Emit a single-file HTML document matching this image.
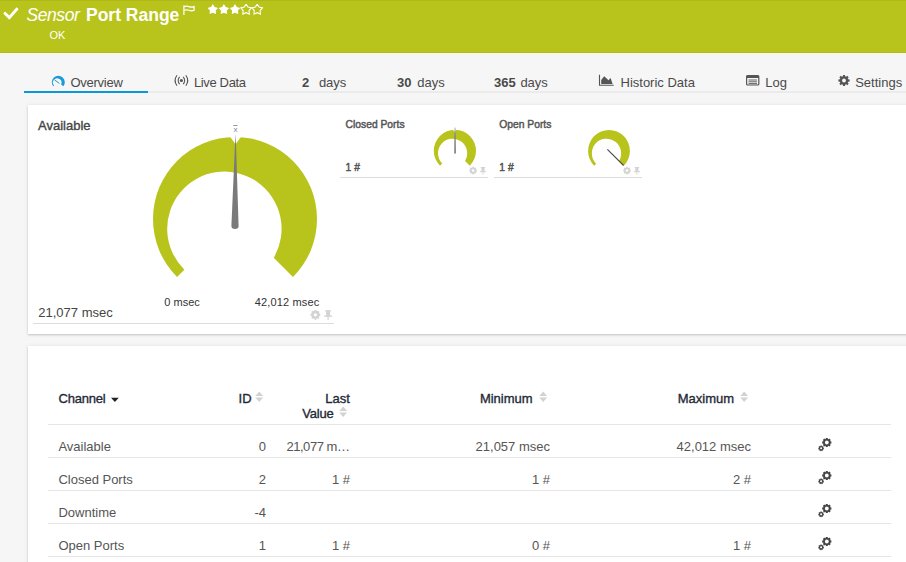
<!DOCTYPE html>
<html><head><meta charset="utf-8">
<style>
html,body{margin:0;padding:0;}
body{width:906px;height:562px;overflow:hidden;position:relative;background:#f6f6f6;font-family:"Liberation Sans",sans-serif;}
.t{position:absolute;white-space:nowrap;}
.abs{position:absolute;}
</style></head><body>
<div class="abs" style="left:0;top:0;width:906px;height:53px;background:#b8c41c;"></div>
<div class="abs" style="left:0;top:52px;width:906px;height:1px;background:#b0bc10;"></div>
<div class="abs" style="left:0;top:0;width:906px;height:1px;background:#aeb817;"></div>
<svg class="abs" style="left:0;top:0" width="30" height="30"><path d="M4.2 12.6 L9.3 17.6 L17.6 8.2" fill="none" stroke="#fff" stroke-width="2.8"/></svg>
<div class="t" style="left:26.40px;top:6.99px;font-size:17.5px;line-height:17.5px;font-weight:normal;font-style:italic;color:#fff;letter-spacing:-0.4px;">Sensor</div>
<div class="t" style="left:86.00px;top:6.99px;font-size:17.5px;line-height:17.5px;font-weight:bold;font-style:normal;color:#fff;">Port Range</div>
<svg class="abs" style="left:0;top:0" width="200" height="20"><path d="M183.9 15 V5.6 M183.9 6.6 Q186.4 5.6 189 6.6 Q191.6 7.6 194.1 6.6 V10.3 Q191.6 11.3 189 10.3 Q186.4 9.3 183.9 10.3" fill="none" stroke="#fff" stroke-width="1.2"/></svg><svg class="abs" style="left:208px;top:4px" width="60" height="12"><polygon points="4.80,0.10 6.61,3.11 10.03,3.90 7.73,6.55 8.03,10.05 4.80,8.68 1.57,10.05 1.87,6.55 -0.43,3.90 2.99,3.11" fill="#fff"/><polygon points="15.90,0.10 17.71,3.11 21.13,3.90 18.83,6.55 19.13,10.05 15.90,8.68 12.67,10.05 12.97,6.55 10.67,3.90 14.09,3.11" fill="#fff"/><polygon points="27.00,0.10 28.81,3.11 32.23,3.90 29.93,6.55 30.23,10.05 27.00,8.68 23.77,10.05 24.07,6.55 21.77,3.90 25.19,3.11" fill="#fff"/><polygon points="38.10,0.10 39.91,3.11 43.33,3.90 41.03,6.55 41.33,10.05 38.10,8.68 34.87,10.05 35.17,6.55 32.87,3.90 36.29,3.11" fill="none" stroke="#fff" stroke-width="1.1"/><polygon points="49.20,0.10 51.01,3.11 54.43,3.90 52.13,6.55 52.43,10.05 49.20,8.68 45.97,10.05 46.27,6.55 43.97,3.90 47.39,3.11" fill="none" stroke="#fff" stroke-width="1.1"/></svg>
<div class="t" style="left:49.40px;top:30.29px;font-size:11px;line-height:11px;font-weight:normal;font-style:normal;color:#fff;">OK</div>
<div class="abs" style="left:24px;top:91px;width:882px;height:2px;background:#ebebeb;"></div>
<div class="abs" style="left:24px;top:91px;width:124px;height:2px;background:#0a98d6;"></div>
<svg class="abs" style="left:0;top:0" width="906" height="100"><path d="M53.18 86.20 A6.5 6.5 0 1 1 63.42 86.20 L61.11 84.39 A4.3 4.3 0 1 0 54.05 85.52 Z" fill="#1a9ad6"/><path d="M54.6 79.9 L59.3 83.4" stroke="#1a9ad6" stroke-width="1"/><circle cx="181.4" cy="80.5" r="1.6" fill="#555"/><path d="M179.7 76.9 A5 5 0 0 0 179.7 84.1 M183.1 76.9 A5 5 0 0 1 183.1 84.1 M177 75.2 A9 9 0 0 0 177 85.8 M185.8 75.2 A9 9 0 0 1 185.8 85.8" fill="none" stroke="#555" stroke-width="1.1"/><path d="M599.5 74.8 V85.2 H613.7" fill="none" stroke="#555" stroke-width="1.1"/><path d="M601.2 83.9 V80 L604.2 76.2 L608.5 80.2 L610.6 78 L612.6 83.9 Z" fill="#555"/></svg>
<div class="t" style="left:70.40px;top:75.80px;font-size:13px;line-height:13px;font-weight:normal;font-style:normal;color:#4a4a4a;letter-spacing:-0.25px;">Overview</div>
<div class="t" style="left:193.90px;top:75.80px;font-size:13px;line-height:13px;font-weight:normal;font-style:normal;color:#4a4a4a;letter-spacing:-0.35px;">Live Data</div>
<div class="t" style="left:301.90px;top:75.80px;font-size:13px;line-height:13px;font-weight:bold;font-style:normal;color:#4a4a4a;">2</div>
<div class="t" style="left:318.90px;top:75.80px;font-size:13px;line-height:13px;font-weight:normal;font-style:normal;color:#4a4a4a;">days</div>
<div class="t" style="left:397.10px;top:75.80px;font-size:13px;line-height:13px;font-weight:bold;font-style:normal;color:#4a4a4a;">30</div>
<div class="t" style="left:417.20px;top:75.80px;font-size:13px;line-height:13px;font-weight:normal;font-style:normal;color:#4a4a4a;">days</div>
<div class="t" style="left:494.10px;top:75.80px;font-size:13px;line-height:13px;font-weight:bold;font-style:normal;color:#4a4a4a;">365</div>
<div class="t" style="left:520.40px;top:75.80px;font-size:13px;line-height:13px;font-weight:normal;font-style:normal;color:#4a4a4a;">days</div>
<div class="t" style="left:620.50px;top:75.80px;font-size:13px;line-height:13px;font-weight:normal;font-style:normal;color:#4a4a4a;">Historic Data</div>
<svg class="abs" style="left:746px;top:75px" width="14" height="11"><rect x="0.6" y="0.6" width="12.2" height="9.4" rx="1" fill="none" stroke="#555" stroke-width="1.2"/><rect x="0.6" y="0.6" width="12.2" height="2.4" fill="#555"/><path d="M2.5 5 H11 M2.5 6.8 H11 M2.5 8.6 H11" stroke="#555" stroke-width="0.9"/></svg>
<div class="t" style="left:765.20px;top:75.80px;font-size:13px;line-height:13px;font-weight:normal;font-style:normal;color:#4a4a4a;">Log</div>
<svg class="abs" style="left:837px;top:74px" width="14" height="14"><polygon points="5.85,2.36 6.06,0.88 7.94,0.88 8.15,2.36 9.12,2.76 10.31,1.86 11.64,3.19 10.74,4.38 11.14,5.35 12.62,5.56 12.62,7.44 11.14,7.65 10.74,8.62 11.64,9.81 10.31,11.14 9.12,10.24 8.15,10.64 7.94,12.12 6.06,12.12 5.85,10.64 4.88,10.24 3.69,11.14 2.36,9.81 3.26,8.62 2.86,7.65 1.38,7.44 1.38,5.56 2.86,5.35 3.26,4.38 2.36,3.19 3.69,1.86 4.88,2.76" fill="#555"/><circle cx="7" cy="6.5" r="1.9" fill="#f6f6f6"/></svg>
<div class="t" style="left:855.20px;top:75.80px;font-size:13px;line-height:13px;font-weight:normal;font-style:normal;color:#4a4a4a;">Settings</div>
<div class="abs" style="left:28px;top:105px;width:900px;height:229px;background:#fff;box-shadow:0 1px 2px rgba(0,0,0,0.18),0 0 5px rgba(0,0,0,0.06);"></div>
<div class="t" style="left:38.00px;top:118.90px;font-size:13px;line-height:13px;font-weight:normal;font-style:normal;color:#444;-webkit-text-stroke:0.35px #444;">Available</div>
<div class="abs" style="left:33px;top:323px;width:301px;height:1px;background:#ddd;"></div>
<div class="t" style="left:38.30px;top:305.80px;font-size:13px;line-height:13px;font-weight:normal;font-style:normal;color:#444;">21,077 msec</div>
<div class="t" style="left:164.30px;top:297.49px;font-size:11px;line-height:11px;font-weight:normal;font-style:normal;color:#333;">0 msec</div>
<div class="t" style="left:254.80px;top:297.49px;font-size:11px;line-height:11px;font-weight:normal;font-style:normal;color:#333;letter-spacing:0.15px;">42,012 msec</div>
<svg class="abs" style="left:0;top:0" width="906" height="562"><path d="M177.02 276.98 A82 82 0 1 1 292.98 276.98 L273.74 257.74 A57.2 57.2 0 1 0 184.36 269.64 Z" fill="#b8c41c"/><path d="M229.6 136 L235.5 144.2 L241.7 136 Z" fill="#fff"/><path d="M235.5 134 L236 144 L238.6 226 Q238.6 229 235 229 Q231.4 229 231.4 226 L235 144 Z" fill="#7a7a7a"/><path d="M233.2 125.5 H237.6" stroke="#8a8f99" stroke-width="0.9"/><text x="235.4" y="131.8" font-size="8" text-anchor="middle" fill="#7d8594" font-family="Liberation Sans">x</text><path d="M439.98 165.72 A21.1 21.1 0 1 1 469.82 165.72 L465.04 160.94 A14.6 14.6 0 1 0 442.18 163.52 Z" fill="#b8c41c"/><path d="M452.3 129 L454.6 132 L457 129 Z" fill="#fff"/><defs><linearGradient id="ng" x1="0" y1="0" x2="0" y2="1"><stop offset="0" stop-color="#ccc"/><stop offset="0.25" stop-color="#888"/><stop offset="1" stop-color="#555"/></linearGradient></defs><rect x="454.4" y="127.5" width="1.3" height="26" fill="url(#ng)"/><path d="M594.22 165.68 A20.9 20.9 0 1 1 623.78 165.68 L619.02 160.92 A14.65 14.65 0 1 0 596.19 163.71 Z" fill="#b8c41c"/><path d="M607.4 149.3 L623.6 165.5" stroke="#4a4a4a" stroke-width="1.1"/><polygon points="314.20,311.09 314.42,309.90 316.38,309.90 316.60,311.09 317.18,311.33 318.18,310.64 319.56,312.02 318.87,313.02 319.11,313.60 320.30,313.82 320.30,315.78 319.11,316.00 318.87,316.58 319.56,317.58 318.18,318.96 317.18,318.27 316.60,318.51 316.38,319.70 314.42,319.70 314.20,318.51 313.62,318.27 312.62,318.96 311.24,317.58 311.93,316.58 311.69,316.00 310.50,315.78 310.50,313.82 311.69,313.60 311.93,313.02 311.24,312.02 312.62,310.64 313.62,311.33" fill="#d3d3d3"/><circle cx="315.4" cy="314.8" r="1.6" fill="#fff"/><rect x="325.30" y="310.20" width="5.60" height="1.30" fill="#d3d3d3"/><rect x="326.10" y="310.80" width="4.00" height="5.00" fill="#d3d3d3"/><rect x="324.30" y="315.40" width="7.60" height="1.50" fill="#d3d3d3"/><rect x="327.50" y="316.80" width="1.20" height="3.20" fill="#d3d3d3"/><polygon points="472.17,167.70 472.34,166.77 473.86,166.77 474.03,167.70 474.49,167.89 475.27,167.36 476.34,168.43 475.81,169.21 476.00,169.67 476.93,169.84 476.93,171.36 476.00,171.53 475.81,171.99 476.34,172.77 475.27,173.84 474.49,173.31 474.03,173.50 473.86,174.43 472.34,174.43 472.17,173.50 471.71,173.31 470.93,173.84 469.86,172.77 470.39,171.99 470.20,171.53 469.27,171.36 469.27,169.84 470.20,169.67 470.39,169.21 469.86,168.43 470.93,167.36 471.71,167.89" fill="#d3d3d3"/><circle cx="473.1" cy="170.6" r="1.2480000000000002" fill="#fff"/><rect x="480.82" y="167.01" width="4.37" height="1.01" fill="#d3d3d3"/><rect x="481.45" y="167.48" width="3.12" height="3.90" fill="#d3d3d3"/><rect x="480.04" y="171.07" width="5.93" height="1.17" fill="#d3d3d3"/><rect x="482.54" y="172.16" width="0.94" height="2.50" fill="#d3d3d3"/><polygon points="626.07,167.70 626.24,166.77 627.76,166.77 627.93,167.70 628.39,167.89 629.17,167.36 630.24,168.43 629.71,169.21 629.90,169.67 630.83,169.84 630.83,171.36 629.90,171.53 629.71,171.99 630.24,172.77 629.17,173.84 628.39,173.31 627.93,173.50 627.76,174.43 626.24,174.43 626.07,173.50 625.61,173.31 624.83,173.84 623.76,172.77 624.29,171.99 624.10,171.53 623.17,171.36 623.17,169.84 624.10,169.67 624.29,169.21 623.76,168.43 624.83,167.36 625.61,167.89" fill="#d3d3d3"/><circle cx="627.0" cy="170.6" r="1.2480000000000002" fill="#fff"/><rect x="634.72" y="167.01" width="4.37" height="1.01" fill="#d3d3d3"/><rect x="635.35" y="167.48" width="3.12" height="3.90" fill="#d3d3d3"/><rect x="633.94" y="171.07" width="5.93" height="1.17" fill="#d3d3d3"/><rect x="636.44" y="172.16" width="0.94" height="2.50" fill="#d3d3d3"/></svg>
<div class="t" style="left:345.60px;top:119.88px;font-size:10.3px;line-height:10.3px;font-weight:normal;font-style:normal;color:#555;-webkit-text-stroke:0.45px #555;">Closed Ports</div>
<div class="t" style="left:345.60px;top:162.88px;font-size:10.3px;line-height:10.3px;font-weight:normal;font-style:normal;color:#555;-webkit-text-stroke:0.45px #555;">1 #</div>
<div class="abs" style="left:340px;top:177px;width:148px;height:1px;background:#ddd;"></div>
<div class="t" style="left:499.30px;top:119.88px;font-size:10.3px;line-height:10.3px;font-weight:normal;font-style:normal;color:#555;-webkit-text-stroke:0.45px #555;">Open Ports</div>
<div class="t" style="left:499.30px;top:162.88px;font-size:10.3px;line-height:10.3px;font-weight:normal;font-style:normal;color:#555;-webkit-text-stroke:0.45px #555;">1 #</div>
<div class="abs" style="left:494px;top:177px;width:148px;height:1px;background:#ddd;"></div>
<div class="abs" style="left:28px;top:346px;width:900px;height:260px;background:#fff;box-shadow:0 1px 2px rgba(0,0,0,0.18),0 0 5px rgba(0,0,0,0.06);"></div>
<div class="t" style="left:58.50px;top:392.00px;font-size:13px;line-height:13px;font-weight:normal;font-style:normal;color:#1f2a36;-webkit-text-stroke:0.35px #1f2a36;letter-spacing:-0.2px;">Channel</div>
<svg class="abs" style="left:110px;top:397px" width="10" height="6"><path d="M1 0.8 H8.8 L4.9 5 Z" fill="#222"/></svg>
<div class="t" style="left:238.60px;top:392.00px;font-size:13px;line-height:13px;font-weight:normal;font-style:normal;color:#1f2a36;-webkit-text-stroke:0.35px #1f2a36;">ID</div>
<svg class="abs" style="left:255.2px;top:390.6px" width="9" height="12"><path d="M0.3 5 L4.2 0.4 L8.1 5 Z M0.3 6.4 L4.2 11 L8.1 6.4 Z" fill="#d2d2d2"/></svg>
<div class="t" style="right:556.10px;top:392.00px;font-size:13px;line-height:13px;font-weight:normal;font-style:normal;color:#1f2a36;-webkit-text-stroke:0.35px #1f2a36;">Last</div>
<div class="t" style="left:302.30px;top:406.90px;font-size:13px;line-height:13px;font-weight:normal;font-style:normal;color:#1f2a36;-webkit-text-stroke:0.35px #1f2a36;letter-spacing:-0.2px;">Value</div>
<svg class="abs" style="left:339.3px;top:405.9px" width="9" height="12"><path d="M0.3 5 L4.2 0.4 L8.1 5 Z M0.3 6.4 L4.2 11 L8.1 6.4 Z" fill="#d2d2d2"/></svg>
<div class="t" style="left:479.90px;top:392.00px;font-size:13px;line-height:13px;font-weight:normal;font-style:normal;color:#1f2a36;-webkit-text-stroke:0.35px #1f2a36;">Minimum</div>
<svg class="abs" style="left:539.2px;top:390.6px" width="9" height="12"><path d="M0.3 5 L4.2 0.4 L8.1 5 Z M0.3 6.4 L4.2 11 L8.1 6.4 Z" fill="#d2d2d2"/></svg>
<div class="t" style="left:677.70px;top:392.00px;font-size:13px;line-height:13px;font-weight:normal;font-style:normal;color:#1f2a36;-webkit-text-stroke:0.35px #1f2a36;">Maximum</div>
<svg class="abs" style="left:740.2px;top:390.6px" width="9" height="12"><path d="M0.3 5 L4.2 0.4 L8.1 5 Z M0.3 6.4 L4.2 11 L8.1 6.4 Z" fill="#d2d2d2"/></svg>
<div class="abs" style="left:48px;top:424px;width:843px;height:1px;background:#e6e6e6;"></div>
<div class="t" style="left:58.40px;top:440.10px;font-size:13px;line-height:13px;font-weight:normal;font-style:normal;color:#555;">Available</div>
<div class="t" style="right:640.00px;top:440.10px;font-size:13px;line-height:13px;font-weight:normal;font-style:normal;color:#555;">0</div>
<div class="t" style="left:286.40px;top:440.10px;font-size:13px;line-height:13px;font-weight:normal;font-style:normal;color:#555;letter-spacing:-0.45px;">21,077 m…</div>
<div class="t" style="right:356.00px;top:440.10px;font-size:13px;line-height:13px;font-weight:normal;font-style:normal;color:#555;">21,057 msec</div>
<div class="t" style="right:155.00px;top:440.10px;font-size:13px;line-height:13px;font-weight:normal;font-style:normal;color:#555;">42,012 msec</div>
<div class="abs" style="left:48px;top:457px;width:843px;height:1px;background:#e6e6e6;"></div>
<svg class="abs" style="left:818px;top:437.9px" width="15" height="14"><polygon points="7.67,1.08 7.88,-0.11 9.72,-0.11 9.93,1.08 10.42,1.29 11.41,0.59 12.71,1.89 12.01,2.88 12.22,3.37 13.41,3.58 13.41,5.42 12.22,5.63 12.01,6.12 12.71,7.11 11.41,8.41 10.42,7.71 9.93,7.92 9.72,9.11 7.88,9.11 7.67,7.92 7.18,7.71 6.19,8.41 4.89,7.11 5.59,6.12 5.38,5.63 4.19,5.42 4.19,3.58 5.38,3.37 5.59,2.88 4.89,1.89 6.19,0.59 7.18,1.29" fill="#444"/><circle cx="8.8" cy="4.5" r="1.9" fill="#fff"/><polygon points="2.31,8.25 2.45,7.47 3.75,7.47 3.89,8.25 4.21,8.40 4.91,8.03 5.71,9.04 5.20,9.64 5.28,9.99 6.00,10.30 5.71,11.56 4.93,11.53 4.70,11.81 4.91,12.57 3.75,13.13 3.28,12.49 2.92,12.49 2.45,13.13 1.29,12.57 1.50,11.81 1.27,11.53 0.49,11.56 0.20,10.30 0.92,9.99 1.00,9.64 0.49,9.04 1.29,8.03 1.99,8.40" fill="#444"/><circle cx="3.1" cy="10.3" r="1.0" fill="#fff"/></svg>
<div class="t" style="left:58.40px;top:473.00px;font-size:13px;line-height:13px;font-weight:normal;font-style:normal;color:#555;">Closed Ports</div>
<div class="t" style="right:640.00px;top:473.00px;font-size:13px;line-height:13px;font-weight:normal;font-style:normal;color:#555;">2</div>
<div class="t" style="right:556.00px;top:473.00px;font-size:13px;line-height:13px;font-weight:normal;font-style:normal;color:#555;">1 #</div>
<div class="t" style="right:356.00px;top:473.00px;font-size:13px;line-height:13px;font-weight:normal;font-style:normal;color:#555;">1 #</div>
<div class="t" style="right:155.00px;top:473.00px;font-size:13px;line-height:13px;font-weight:normal;font-style:normal;color:#555;">2 #</div>
<div class="abs" style="left:48px;top:490px;width:843px;height:1px;background:#e6e6e6;"></div>
<svg class="abs" style="left:818px;top:470.9px" width="15" height="14"><polygon points="7.67,1.08 7.88,-0.11 9.72,-0.11 9.93,1.08 10.42,1.29 11.41,0.59 12.71,1.89 12.01,2.88 12.22,3.37 13.41,3.58 13.41,5.42 12.22,5.63 12.01,6.12 12.71,7.11 11.41,8.41 10.42,7.71 9.93,7.92 9.72,9.11 7.88,9.11 7.67,7.92 7.18,7.71 6.19,8.41 4.89,7.11 5.59,6.12 5.38,5.63 4.19,5.42 4.19,3.58 5.38,3.37 5.59,2.88 4.89,1.89 6.19,0.59 7.18,1.29" fill="#444"/><circle cx="8.8" cy="4.5" r="1.9" fill="#fff"/><polygon points="2.31,8.25 2.45,7.47 3.75,7.47 3.89,8.25 4.21,8.40 4.91,8.03 5.71,9.04 5.20,9.64 5.28,9.99 6.00,10.30 5.71,11.56 4.93,11.53 4.70,11.81 4.91,12.57 3.75,13.13 3.28,12.49 2.92,12.49 2.45,13.13 1.29,12.57 1.50,11.81 1.27,11.53 0.49,11.56 0.20,10.30 0.92,9.99 1.00,9.64 0.49,9.04 1.29,8.03 1.99,8.40" fill="#444"/><circle cx="3.1" cy="10.3" r="1.0" fill="#fff"/></svg>
<div class="t" style="left:58.40px;top:505.90px;font-size:13px;line-height:13px;font-weight:normal;font-style:normal;color:#555;">Downtime</div>
<div class="t" style="right:640.00px;top:505.90px;font-size:13px;line-height:13px;font-weight:normal;font-style:normal;color:#555;">-4</div>
<div class="abs" style="left:48px;top:523px;width:843px;height:1px;background:#e6e6e6;"></div>
<svg class="abs" style="left:818px;top:503.9px" width="15" height="14"><polygon points="7.67,1.08 7.88,-0.11 9.72,-0.11 9.93,1.08 10.42,1.29 11.41,0.59 12.71,1.89 12.01,2.88 12.22,3.37 13.41,3.58 13.41,5.42 12.22,5.63 12.01,6.12 12.71,7.11 11.41,8.41 10.42,7.71 9.93,7.92 9.72,9.11 7.88,9.11 7.67,7.92 7.18,7.71 6.19,8.41 4.89,7.11 5.59,6.12 5.38,5.63 4.19,5.42 4.19,3.58 5.38,3.37 5.59,2.88 4.89,1.89 6.19,0.59 7.18,1.29" fill="#444"/><circle cx="8.8" cy="4.5" r="1.9" fill="#fff"/><polygon points="2.31,8.25 2.45,7.47 3.75,7.47 3.89,8.25 4.21,8.40 4.91,8.03 5.71,9.04 5.20,9.64 5.28,9.99 6.00,10.30 5.71,11.56 4.93,11.53 4.70,11.81 4.91,12.57 3.75,13.13 3.28,12.49 2.92,12.49 2.45,13.13 1.29,12.57 1.50,11.81 1.27,11.53 0.49,11.56 0.20,10.30 0.92,9.99 1.00,9.64 0.49,9.04 1.29,8.03 1.99,8.40" fill="#444"/><circle cx="3.1" cy="10.3" r="1.0" fill="#fff"/></svg>
<div class="t" style="left:58.40px;top:538.70px;font-size:13px;line-height:13px;font-weight:normal;font-style:normal;color:#555;">Open Ports</div>
<div class="t" style="right:640.00px;top:538.70px;font-size:13px;line-height:13px;font-weight:normal;font-style:normal;color:#555;">1</div>
<div class="t" style="right:556.00px;top:538.70px;font-size:13px;line-height:13px;font-weight:normal;font-style:normal;color:#555;">1 #</div>
<div class="t" style="right:356.00px;top:538.70px;font-size:13px;line-height:13px;font-weight:normal;font-style:normal;color:#555;">0 #</div>
<div class="t" style="right:155.00px;top:538.70px;font-size:13px;line-height:13px;font-weight:normal;font-style:normal;color:#555;">1 #</div>
<div class="abs" style="left:48px;top:556px;width:843px;height:1px;background:#e6e6e6;"></div>
<svg class="abs" style="left:818px;top:536.9px" width="15" height="14"><polygon points="7.67,1.08 7.88,-0.11 9.72,-0.11 9.93,1.08 10.42,1.29 11.41,0.59 12.71,1.89 12.01,2.88 12.22,3.37 13.41,3.58 13.41,5.42 12.22,5.63 12.01,6.12 12.71,7.11 11.41,8.41 10.42,7.71 9.93,7.92 9.72,9.11 7.88,9.11 7.67,7.92 7.18,7.71 6.19,8.41 4.89,7.11 5.59,6.12 5.38,5.63 4.19,5.42 4.19,3.58 5.38,3.37 5.59,2.88 4.89,1.89 6.19,0.59 7.18,1.29" fill="#444"/><circle cx="8.8" cy="4.5" r="1.9" fill="#fff"/><polygon points="2.31,8.25 2.45,7.47 3.75,7.47 3.89,8.25 4.21,8.40 4.91,8.03 5.71,9.04 5.20,9.64 5.28,9.99 6.00,10.30 5.71,11.56 4.93,11.53 4.70,11.81 4.91,12.57 3.75,13.13 3.28,12.49 2.92,12.49 2.45,13.13 1.29,12.57 1.50,11.81 1.27,11.53 0.49,11.56 0.20,10.30 0.92,9.99 1.00,9.64 0.49,9.04 1.29,8.03 1.99,8.40" fill="#444"/><circle cx="3.1" cy="10.3" r="1.0" fill="#fff"/></svg>
</body></html>
